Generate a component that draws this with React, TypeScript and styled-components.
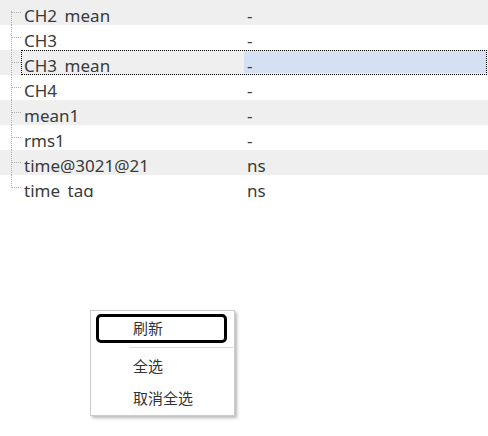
import React from 'react';
import styled, { createGlobalStyle } from 'styled-components';

const GlobalStyle = createGlobalStyle`
  html, body {
    margin: 0;
    padding: 0;
    background: #ffffff;
  }
  body {
    font-family: "Noto Sans", "Noto Sans CJK SC", sans-serif;
    color: #333333;
  }
`;

const Page = styled.div`
  position: relative;
  width: 488px;
  height: 436px;
  overflow: hidden;
  background: #ffffff;
`;

const TreeList = styled.div`
  display: flex;
  flex-direction: column;
  height: 197px;
  overflow: hidden;
`;

const Row = styled.div<{ $alt: boolean }>`
  display: flex;
  height: 25px;
  flex-shrink: 0;
  background: ${p => (p.$alt ? '#efefef' : '#ffffff')};
`;

const Gutter = styled.div<{ $first: boolean; $last: boolean }>`
  position: relative;
  width: 21px;
  flex-shrink: 0;

  &::before {
    content: '';
    position: absolute;
    left: 11px;
    top: ${p => (p.$first ? '11px' : '0')};
    bottom: ${p => (p.$last ? '12px' : '0')};
    border-left: 1px dotted #b0b0b0;
  }

  &::after {
    content: '';
    position: absolute;
    left: 12px;
    width: 9px;
    top: 12px;
    border-top: 1px dotted #b0b0b0;
  }
`;

const Cells = styled.div<{ $focused: boolean }>`
  display: flex;
  flex: 1;
  border: 1px dotted ${p => (p.$focused ? '#000000' : 'transparent')};
  margin-right: 1px;
`;

const NameCell = styled.div`
  width: 220px;
  flex-shrink: 0;
  padding: 6px 0 0 2px;
  height: 16px;
  overflow: hidden;
  font-size: 17px;
  line-height: 17px;
  white-space: nowrap;
  color: #3a3a3a;
`;

const ValueCell = styled.div<{ $selected: boolean }>`
  flex: 1;
  padding: 6px 0 0 3px;
  height: 16px;
  overflow: hidden;
  font-size: 17px;
  line-height: 17px;
  white-space: nowrap;
  color: #3a3a3a;
  background: ${p => (p.$selected ? '#d5e0f2' : 'transparent')};
`;

const Menu = styled.div`
  position: absolute;
  left: 90px;
  top: 310px;
  width: 143px;
  padding: 1px 0;
  display: flex;
  flex-direction: column;
  background: #ffffff;
  border: 1px solid #cccccc;
  box-shadow: 2px 2px 3px rgba(0, 0, 0, 0.28);
`;

const MenuItem = styled.div<{ $active?: boolean }>`
  display: flex;
  align-items: center;
  height: 20px;
  padding: 0 0 3px 34px;
  margin: 2px 7px 1px 5px;
  border: 3px solid ${p => (p.$active ? '#000000' : 'transparent')};
  border-radius: 5px;
  font-family: "Noto Sans CJK SC", sans-serif;
  font-size: 15px;
  color: #333333;
`;

const Separator = styled.div`
  height: 1px;
  margin: 3px 1px 2px 38px;
  background: #d9d9d9;
`;

const rows = [
  { name: 'CH2_mean', value: '-' },
  { name: 'CH3', value: '-' },
  { name: 'CH3_mean', value: '-', selected: true },
  { name: 'CH4', value: '-' },
  { name: 'mean1', value: '-' },
  { name: 'rms1', value: '-' },
  { name: 'time@3021@21', value: 'ns' },
  { name: 'time_tag', value: 'ns' },
];

const App: React.FC = () => {
  return (
    <Page>
      <GlobalStyle />
      <TreeList>
        {rows.map((r, i) => (
          <Row key={r.name} $alt={i % 2 === 0}>
            <Gutter $first={i === 0} $last={i === rows.length - 1} />
            <Cells $focused={!!r.selected}>
              <NameCell>{r.name}</NameCell>
              <ValueCell $selected={!!r.selected}>{r.value}</ValueCell>
            </Cells>
          </Row>
        ))}
      </TreeList>

      <Menu>
        <MenuItem $active>刷新</MenuItem>
        <Separator />
        <MenuItem>全选</MenuItem>
        <MenuItem>取消全选</MenuItem>
      </Menu>
    </Page>
  );
};

export default App;
